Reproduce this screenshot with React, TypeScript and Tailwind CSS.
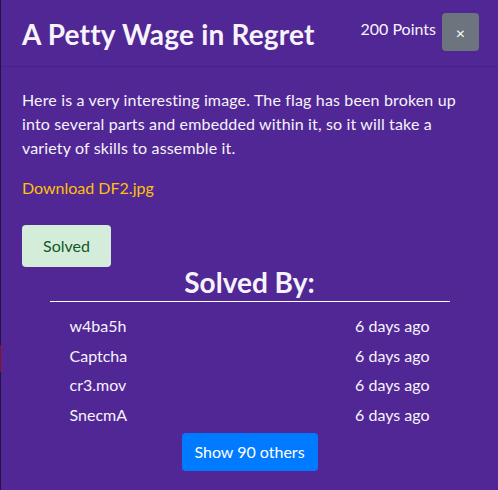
export default function App() {
    const solvers = [
        {name: 'w4ba5h', when: '6 days ago'},
        {name: 'Captcha', when: '6 days ago'},
        {name: 'cr3.mov', when: '6 days ago'},
        {name: 'SnecmA', when: '6 days ago'},
    ]

    return (
        <div className="w-[498px] h-[490px] flex bg-[#1b1030] overflow-hidden"
             style={{fontFamily: 'Lato, "Noto Sans", sans-serif'}}>
            {/* sliver of the page behind the modal */}
            <div className="w-px flex flex-col">
                <div className="h-[345px] bg-[#231343]"/>
                <div className="h-[27px] bg-[#8a1020]"/>
                <div className="flex-1 bg-[#231343]"/>
            </div>
            <div className="flex-1 bg-[#512796] text-[#f6f3fb]">
                <div className="h-[67px] pl-[21px] pr-[19px] flex items-center justify-between border-b border-[#47208a]">
                    <h4 className="text-[28px] font-bold leading-none pt-[1px] tracking-[0.2px]">A Petty Wage in Regret</h4>
                    <div className="flex items-center gap-[6px] pb-[3px]">
                        <span className="text-[16px] mb-[5px]">200 Points</span>
                        <button
                            className="w-[37px] h-[38px] rounded-[4px] bg-[#6c757d] text-white text-[16px] flex items-center justify-center pt-[3px]">
                            ×
                        </button>
                    </div>
                </div>
                <div className="pt-[21px] px-[21px]">
                    <p className="text-[16px] leading-[24px] tracking-[0.15px]">
                        Here is a very interesting image. The flag has been broken up into several parts and embedded
                        within it, so it will take a variety of skills to assemble it.
                    </p>
                    <a className="block mt-[16px] text-[16px] leading-[24px] text-[#ffc107]" href="#">Download DF2.jpg</a>
                    <button
                        className="mt-[25px] w-[89px] h-[42px] rounded-[4px] bg-[#d4edda] text-[#155724] text-[16px]">
                        Solved
                    </button>
                    <div className="mx-auto w-[400px] -mt-[3px]">
                        <h3 className="text-center text-[28px] font-bold leading-[36px] pb-[1px] border-b border-white">Solved By:</h3>
                        <div className="px-[20px] pt-[9px]">
                            {solvers.map(s => (
                                <div key={s.name} className="flex justify-between h-[29.7px] items-center text-[16px]">
                                    <span>{s.name}</span>
                                    <span>{s.when}</span>
                                </div>
                            ))}
                        </div>
                        <div className="flex justify-center mt-[3px]">
                            <button
                                className="w-[136px] h-[38px] rounded-[4px] bg-[#007bff] text-white text-[16px]">
                                Show 90 others
                            </button>
                        </div>
                    </div>
                </div>
            </div>
        </div>
    )
}
